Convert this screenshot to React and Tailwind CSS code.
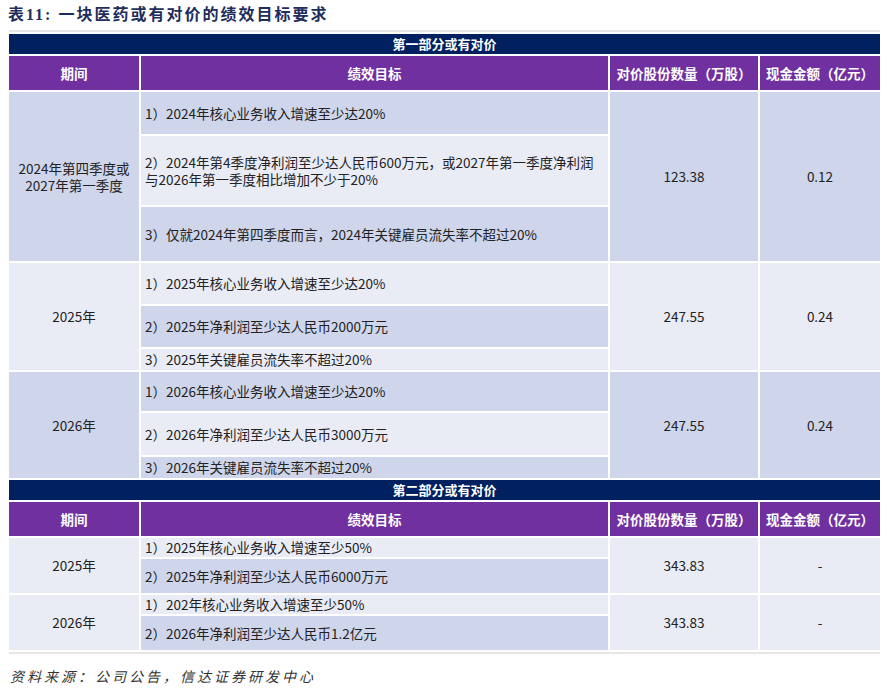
import React from "react";

const D = "bg-[#cfd5ea]";
const L = "bg-[#e9ebf5]";
const cols = "grid grid-cols-[130px_467px_148px_120px] gap-x-[2px]";

const Banner = ({ text }) => (
  <div className="h-[20px] bg-[#002060] text-white font-bold text-[13px] flex items-center justify-center mb-[2px]">
    {text}
  </div>
);

const Header = () => (
  <div className={`${cols} h-[34px] mb-[2px] text-white font-bold text-[13.5px]`}>
    {["期间", "绩效目标", "对价股份数量（万股）", "现金金额（亿元）"].map((t) => (
      <div key={t} className="bg-[#7030a0] flex items-center justify-center">{t}</div>
    ))}
  </div>
);

const Block = ({ period, rows, shares, cash, bg }) => {
  const total = rows.reduce((s, r) => s + r.h, 0) + (rows.length - 1) * 2;
  return (
    <div className={`${cols} mb-[2px]`} style={{ height: total }}>
      <div className={`${bg} flex items-center justify-center text-center leading-[17px]`}>{period}</div>
      <div className="flex flex-col gap-[2px]">
        {rows.map((r, i) => (
          <div key={i} className={`${r.bg} flex items-center px-[4px] leading-[17px]`} style={{ height: r.h }}>
            {r.t}
          </div>
        ))}
      </div>
      <div className={`${bg} flex items-center justify-center`}>{shares}</div>
      <div className={`${bg} flex items-center justify-center`}>{cash}</div>
    </div>
  );
};

export default function App() {
  return (
    <div className="w-[887px] h-[692px] bg-white text-[#222] text-[13.5px]" style={{ fontFamily: '"Noto Sans CJK SC", sans-serif' }}>
      <div className="pl-[8px] pt-[3px] h-[30px] text-[16px] tracking-[2px] font-bold text-[#1f2d5a]" style={{ fontFamily: '"Liberation Serif", "Noto Sans CJK SC", serif' }}>
        表11: 一块医药或有对价的绩效目标要求
      </div>
      <div className="ml-[9px] w-[871px] border-t-2 border-[#e6e6e6] pt-[2px]">
        <Banner text="第一部分或有对价" />
        <Header />
        <Block
          period={<span>2024年第四季度或<br />2027年第一季度</span>}
          bg={D}
          shares="123.38"
          cash="0.12"
          rows={[
            { t: "1）2024年核心业务收入增速至少达20%", h: 42, bg: D },
            { t: <span>2）2024年第4季度净利润至少达人民币600万元，或2027年第一季度净利润<br />与2026年第一季度相比增加不少于20%</span>, h: 69, bg: L },
            { t: "3）仅就2024年第四季度而言，2024年关键雇员流失率不超过20%", h: 54, bg: D },
          ]}
        />
        <Block
          period="2025年"
          bg={L}
          shares="247.55"
          cash="0.24"
          rows={[
            { t: "1）2025年核心业务收入增速至少达20%", h: 41, bg: L },
            { t: "2）2025年净利润至少达人民币2000万元", h: 41, bg: D },
            { t: "3）2025年关键雇员流失率不超过20%", h: 21, bg: L },
          ]}
        />
        <Block
          period="2026年"
          bg={D}
          shares="247.55"
          cash="0.24"
          rows={[
            { t: "1）2026年核心业务收入增速至少达20%", h: 39, bg: D },
            { t: "2）2026年净利润至少达人民币3000万元", h: 42, bg: L },
            { t: "3）2026年关键雇员流失率不超过20%", h: 21, bg: D },
          ]}
        />
        <Banner text="第二部分或有对价" />
        <Header />
        <Block
          period="2025年"
          bg={L}
          shares="343.83"
          cash="-"
          rows={[
            { t: "1）2025年核心业务收入增速至少50%", h: 19, bg: L },
            { t: "2）2025年净利润至少达人民币6000万元", h: 34, bg: D },
          ]}
        />
        <Block
          period="2026年"
          bg={L}
          shares="343.83"
          cash="-"
          rows={[
            { t: "1）202年核心业务收入增速至少50%", h: 19, bg: L },
            { t: "2）2026年净利润至少达人民币1.2亿元", h: 34, bg: D },
          ]}
        />
        <div className="border-t-2 border-[#e6e6e6]" />
      </div>
      <div className="pl-[10px] pt-[12px] italic text-[14px] tracking-[3px] text-[#333]">
        资料来源：公司公告，信达证券研发中心
      </div>
    </div>
  );
}
